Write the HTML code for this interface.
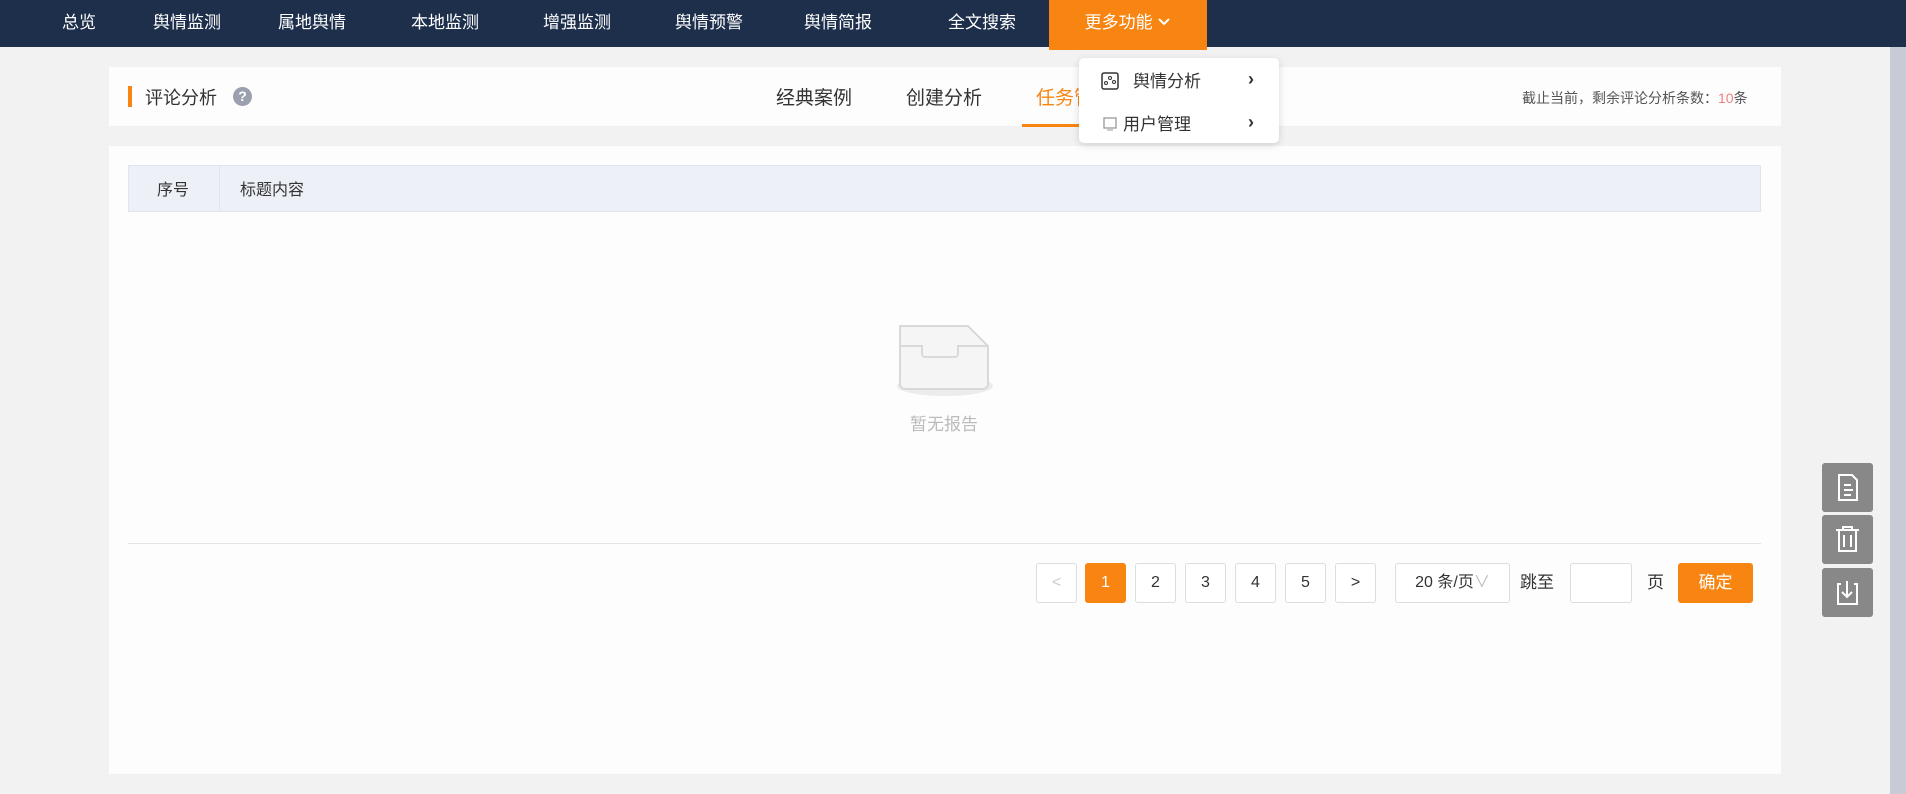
<!DOCTYPE html>
<html><head><meta charset="utf-8"><style>
*{margin:0;padding:0;box-sizing:border-box}
body{width:1906px;height:794px;overflow:hidden;background:#f2f2f2;font-family:"Liberation Sans","Noto Sans CJK SC",sans-serif;position:relative;color:#333}
.nav{position:absolute;left:0;top:0;width:1906px;height:47px;background:#1e2f4c}
.nav span{position:absolute;top:0;line-height:45px;color:#fff;font-size:17px;transform:translateX(-50%)}
.more{position:absolute;left:1049px;top:0;width:158px;height:50px;background:#f88512;color:#fff;font-size:17px;line-height:45px;text-align:center}
.card{position:absolute;background:#fdfdfd}
.abs{position:absolute;line-height:1.2}
.pg{position:absolute;top:563px;width:41px;height:40px;border:1px solid #ddd;border-radius:3px;background:#fff;text-align:center;line-height:38px;font-size:16px;color:#333}
.side{position:absolute;left:1822px;width:51px;height:49px;background:#888;border-radius:3px}
</style></head><body>
<div class="nav">
<span style="left:79px">总览</span><span style="left:187px">舆情监测</span><span style="left:312px">属地舆情</span><span style="left:445px">本地监测</span><span style="left:577px">增强监测</span><span style="left:709px">舆情预警</span><span style="left:838px">舆情简报</span><span style="left:982px">全文搜索</span>
</div>
<div class="more">更多功能 <svg width="14" height="10" viewBox="0 0 14 10" style="vertical-align:1px"><path d="M2 2l5 5 5-5" stroke="#fff" stroke-width="2" fill="none"/></svg></div>
<div style="position:absolute;left:1890px;top:47px;width:16px;height:747px;background:#c8cad6"></div>
<div class="card" style="left:109px;top:67px;width:1672px;height:59px"></div>
<div class="abs" style="left:128px;top:86px;width:4px;height:21px;background:#f88512"></div>
<div class="abs" style="left:145px;top:88px;font-size:18px;color:#333">评论分析</div>
<div class="abs" style="left:233px;top:87px;width:19px;height:19px;border-radius:50%;background:#9aa0ad;color:#fff;font-size:14px;font-weight:bold;text-align:center;line-height:19px">?</div>
<div class="abs" style="left:776px;top:88px;font-size:19px;color:#333">经典案例</div>
<div class="abs" style="left:906px;top:88px;font-size:19px;color:#333">创建分析</div>
<div class="abs" style="left:1036px;top:88px;font-size:19px;color:#f88512">任务管理</div>
<div class="abs" style="left:1022px;top:124px;width:80px;height:3px;background:#f88512"></div>
<div class="abs" style="left:1522px;top:90px;font-size:14px;color:#555">截止当前，剩余评论分析条数：<span style="color:#f08080">10</span>条</div>
<div class="card" style="left:109px;top:146px;width:1672px;height:628px"></div>
<div class="abs" style="left:128px;top:165px;width:1633px;height:47px;background:#edf1f7;border:1px solid #dfe4ee"></div>
<div class="abs" style="left:219px;top:165px;width:1px;height:47px;background:#dfe4ee"></div>
<div class="abs" style="left:157px;top:181px;font-size:16px">序号</div>
<div class="abs" style="left:240px;top:181px;font-size:16px">标题内容</div>
<svg class="abs" style="left:885px;top:322px" width="120" height="80" viewBox="0 0 120 80">
<ellipse cx="60" cy="64" rx="48" ry="10" fill="#ececec"/>
<path d="M15 4h68l20 20v38a5 5 0 0 1-5 5H20a5 5 0 0 1-5-5V24z" fill="#f5f5f5" stroke="#d9d9d9" stroke-width="2"/>
<path d="M15 24h22v8a3 3 0 0 0 3 3h30a3 3 0 0 0 3-3v-8h30" fill="none" stroke="#d9d9d9" stroke-width="2"/>
</svg>
<div class="abs" style="left:910px;top:415px;font-size:17px;color:#bbb">暂无报告</div>
<div class="abs" style="left:128px;top:543px;width:1633px;height:1px;background:#e3e3e3"></div>
<div class="pg" style="left:1036px;color:#ccc">&lt;</div>
<div class="pg" style="left:1085px;background:#f88512;border-color:#f88512;color:#fff">1</div>
<div class="pg" style="left:1135px">2</div>
<div class="pg" style="left:1185px">3</div>
<div class="pg" style="left:1235px">4</div>
<div class="pg" style="left:1285px">5</div>
<div class="pg" style="left:1335px">&gt;</div>
<div class="pg" style="left:1395px;width:115px">20 条/页<span style="color:#bbb">∨</span></div>
<div class="abs" style="left:1520px;top:573px;font-size:17px">跳至</div>
<div class="pg" style="left:1570px;width:62px"></div>
<div class="abs" style="left:1647px;top:573px;font-size:17px">页</div>
<div class="pg" style="left:1678px;width:75px;background:#f88512;border-color:#f88512;color:#fff;font-size:17px">确定</div>
<div class="side" style="top:463px"><svg width="51" height="49"><path d="M17 12h13l5 5v20H17z" fill="none" stroke="#fff" stroke-width="2"/><path d="M22 22h7M22 27h9M22 32h7" stroke="#fff" stroke-width="2"/></svg></div>
<div class="side" style="top:515px"><svg width="51" height="49"><path d="M14 15h23M21 15v-3h9v3M17 15v21h17V15M22 20v12M29 20v12" fill="none" stroke="#fff" stroke-width="2"/></svg></div>
<div class="side" style="top:568px"><svg width="51" height="49"><path d="M19 16h-3v20h19V16h-3M25 13v16M20 24l5 5 5-5" fill="none" stroke="#fff" stroke-width="2"/></svg></div>
<div class="abs" style="left:1079px;top:58px;width:200px;height:85px;background:#fff;border-radius:5px;box-shadow:0 2px 8px rgba(0,0,0,.15)"></div>
<svg class="abs" style="left:1100px;top:71px" width="20" height="20"><rect x="2" y="2" width="16" height="16" rx="2" fill="none" stroke="#333" stroke-width="1.5"/><circle cx="6" cy="12" r="1.5" fill="none" stroke="#333"/><circle cx="10" cy="7" r="1.5" fill="none" stroke="#333"/><circle cx="14" cy="11" r="1.5" fill="none" stroke="#333"/></svg>
<div class="abs" style="left:1133px;top:72px;font-size:17px">舆情分析</div>
<div class="abs" style="left:1248px;top:69px;font-size:18px;font-weight:bold">›</div>
<svg class="abs" style="left:1102px;top:116px" width="16" height="16"><rect x="2" y="2" width="12" height="10" fill="none" stroke="#999" stroke-width="1.3"/><path d="M5 14h6" stroke="#999"/></svg>
<div class="abs" style="left:1123px;top:115px;font-size:17px">用户管理</div>
<div class="abs" style="left:1248px;top:112px;font-size:18px;font-weight:bold">›</div>
</body></html>
